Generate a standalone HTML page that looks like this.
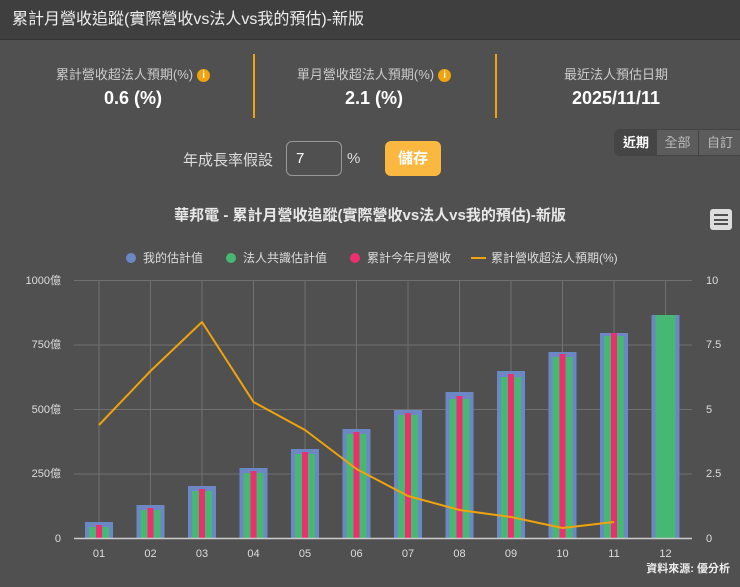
<!DOCTYPE html>
<html><head><meta charset="utf-8"><style>
*{margin:0;padding:0;box-sizing:border-box}
body{width:740px;height:587px;background:#505050;font-family:"Liberation Sans","Noto Sans CJK TC",sans-serif;color:#ddd;position:relative;overflow:hidden}
.hd{height:40px;background:#3f3f3f;border-bottom:1px solid #333;font-size:16px;color:#eee;line-height:40px;padding-left:12px}
.abs{position:absolute}
.lab{font-size:13px;color:#ccc;text-align:center;width:240px}
.val{font-size:18px;font-weight:bold;color:#fff;text-align:center;width:240px}
.info{display:inline-block;width:13px;height:13px;border-radius:50%;background:#f0a30a;color:#fff;font-size:10px;line-height:13px;text-align:center;vertical-align:1px;margin-left:4px;font-weight:bold}
.div{width:2px;height:64px;background:#f0a30a;top:54px}
</style></head><body>
<div class="hd">累計月營收追蹤(實際營收vs法人vs我的預估)-新版</div>
<div class="abs lab" style="left:13px;top:64px">累計營收超法人預期(%)<span class="info">i</span></div>
<div class="abs val" style="left:13px;top:88px">0.6 (%)</div>
<div class="abs div" style="left:253px"></div>
<div class="abs lab" style="left:254px;top:64px">單月營收超法人預期(%)<span class="info">i</span></div>
<div class="abs val" style="left:254px;top:88px">2.1 (%)</div>
<div class="abs div" style="left:495px"></div>
<div class="abs lab" style="left:496px;top:64px">最近法人預估日期</div>
<div class="abs val" style="left:496px;top:88px">2025/11/11</div>
<div class="abs" style="left:614px;top:129px;width:130px;height:27px;border-radius:6px;background:#5c5c5c;border:1px solid #444;display:flex;font-size:13px;line-height:25px;overflow:hidden">
<div style="width:42px;text-align:center;background:#454545;color:#fff;font-weight:bold">近期</div>
<div style="width:42px;text-align:center;color:#bbb;border-right:1px solid #444">全部</div>
<div style="width:42px;text-align:center;color:#bbb">自訂</div></div>
<div class="abs" style="left:183px;top:149px;font-size:15px;color:#ddd">年成長率假設</div>
<div class="abs" style="left:286px;top:141px;width:56px;height:35px;border:1px solid #999;border-radius:6px;font-size:15px;line-height:33px;padding-left:9px;color:#fff">7</div>
<div class="abs" style="left:347px;top:150px;font-size:15px;color:#ddd">%</div>
<div class="abs" style="left:385px;top:141px;width:56px;height:35px;background:#fbb840;border-radius:6px;color:#fff;font-size:15px;font-weight:bold;line-height:35px;text-align:center">儲存</div>
<div class="abs" style="left:0;top:204px;width:740px;text-align:center;font-size:15px;font-weight:bold;color:#e8e8e8">華邦電 - 累計月營收追蹤(實際營收vs法人vs我的預估)-新版</div>
<div class="abs" style="left:710px;top:209px;width:22px;height:21px;background:#ddd;border-radius:3px;padding:5px 4px">
<div style="height:2px;background:#505050;margin-bottom:2.5px"></div><div style="height:2px;background:#505050;margin-bottom:2.5px"></div><div style="height:2px;background:#505050"></div></div>
<svg class="abs" style="left:0;top:0" width="740" height="587" font-family="Liberation Sans, Noto Sans CJK TC, sans-serif">
<g font-size="12" fill="#ddd">
<circle cx="131" cy="258" r="5" fill="#6c88c4"/><text x="143" y="262">我的估計值</text>
<circle cx="231" cy="258" r="5" fill="#46b873"/><text x="243" y="262">法人共識估計值</text>
<circle cx="355" cy="258" r="5" fill="#ee2f6f"/><text x="367" y="262">累計今年月營收</text>
<rect x="471" y="257" width="15" height="2" fill="#f0a30a"/><text x="491" y="262">累計營收超法人預期(%)</text>
</g>
<g stroke="#707070" stroke-width="1">
<line x1="74" y1="280.5" x2="692" y2="280.5"/><line x1="74" y1="345" x2="692" y2="345"/><line x1="74" y1="409.5" x2="692" y2="409.5"/><line x1="74" y1="474" x2="692" y2="474"/>
<line x1="99" y1="280" x2="99" y2="538"/><line x1="150.5" y1="280" x2="150.5" y2="538"/><line x1="202" y1="280" x2="202" y2="538"/><line x1="253.5" y1="280" x2="253.5" y2="538"/><line x1="305" y1="280" x2="305" y2="538"/><line x1="356.5" y1="280" x2="356.5" y2="538"/><line x1="408" y1="280" x2="408" y2="538"/><line x1="459.5" y1="280" x2="459.5" y2="538"/><line x1="511" y1="280" x2="511" y2="538"/><line x1="562.5" y1="280" x2="562.5" y2="538"/><line x1="614" y1="280" x2="614" y2="538"/><line x1="665.5" y1="280" x2="665.5" y2="538"/>
</g>
<g fill="#6c88c4">
<rect x="85" y="522" width="28" height="16"/><rect x="136.5" y="505" width="28" height="33"/><rect x="188" y="486" width="28" height="52"/><rect x="239.5" y="468" width="28" height="70"/><rect x="291" y="449" width="28" height="89"/><rect x="342.5" y="429" width="28" height="109"/><rect x="394" y="410" width="28" height="128"/><rect x="445.5" y="392" width="28" height="146"/><rect x="497" y="371" width="28" height="167"/><rect x="548.5" y="352" width="28" height="186"/><rect x="600" y="333" width="28" height="205"/><rect x="651.5" y="315" width="28" height="223"/>
</g>
<g fill="#46b873">
<rect x="89" y="527" width="20" height="11"/><rect x="140.5" y="510" width="20" height="28"/><rect x="192" y="491" width="20" height="47"/><rect x="243.5" y="473" width="20" height="65"/><rect x="295" y="454" width="20" height="84"/><rect x="346.5" y="434" width="20" height="104"/><rect x="398" y="415" width="20" height="123"/><rect x="449.5" y="399" width="20" height="139"/><rect x="501" y="377" width="20" height="161"/><rect x="552.5" y="357" width="20" height="181"/><rect x="604" y="336" width="20" height="202"/><rect x="655.5" y="315" width="20" height="223"/>
</g>
<g fill="#ee2f6f">
<rect x="96" y="525" width="6" height="13"/><rect x="147.5" y="508" width="6" height="30"/><rect x="199" y="489" width="6" height="49"/><rect x="250.5" y="471" width="6" height="67"/><rect x="302" y="452" width="6" height="86"/><rect x="353.5" y="432" width="6" height="106"/><rect x="405" y="413" width="6" height="125"/><rect x="456.5" y="396" width="6" height="142"/><rect x="508" y="374" width="6" height="164"/><rect x="559.5" y="354" width="6" height="184"/><rect x="611" y="333" width="6" height="205"/>
</g>
<line x1="74" y1="538.5" x2="692" y2="538.5" stroke="#ccc" stroke-width="1.5"/>
<polyline fill="none" stroke="#f0a30a" stroke-width="2" stroke-linejoin="round" points="99,425 150.5,371 202,322 253.5,402 305,430 356.5,469 408,496 459.5,510 511,517 562.5,528 614,522"/>
<g font-size="11" fill="#ddd" text-anchor="end">
<text x="61" y="284">1000億</text><text x="61" y="348">750億</text><text x="61" y="413">500億</text><text x="61" y="477">250億</text><text x="61" y="542">0</text>
</g>
<g font-size="11" fill="#ddd">
<text x="706" y="284">10</text><text x="706" y="348">7.5</text><text x="706" y="413">5</text><text x="706" y="477">2.5</text><text x="706" y="542">0</text>
</g>
<g font-size="11" fill="#ddd" text-anchor="middle">
<text x="99" y="557">01</text><text x="150.5" y="557">02</text><text x="202" y="557">03</text><text x="253.5" y="557">04</text><text x="305" y="557">05</text><text x="356.5" y="557">06</text><text x="408" y="557">07</text><text x="459.5" y="557">08</text><text x="511" y="557">09</text><text x="562.5" y="557">10</text><text x="614" y="557">11</text><text x="665.5" y="557">12</text>
</g>
<text x="730" y="572" font-size="11" fill="#eee" font-weight="bold" text-anchor="end">資料來源: 優分析</text>
</svg>
</body></html>
